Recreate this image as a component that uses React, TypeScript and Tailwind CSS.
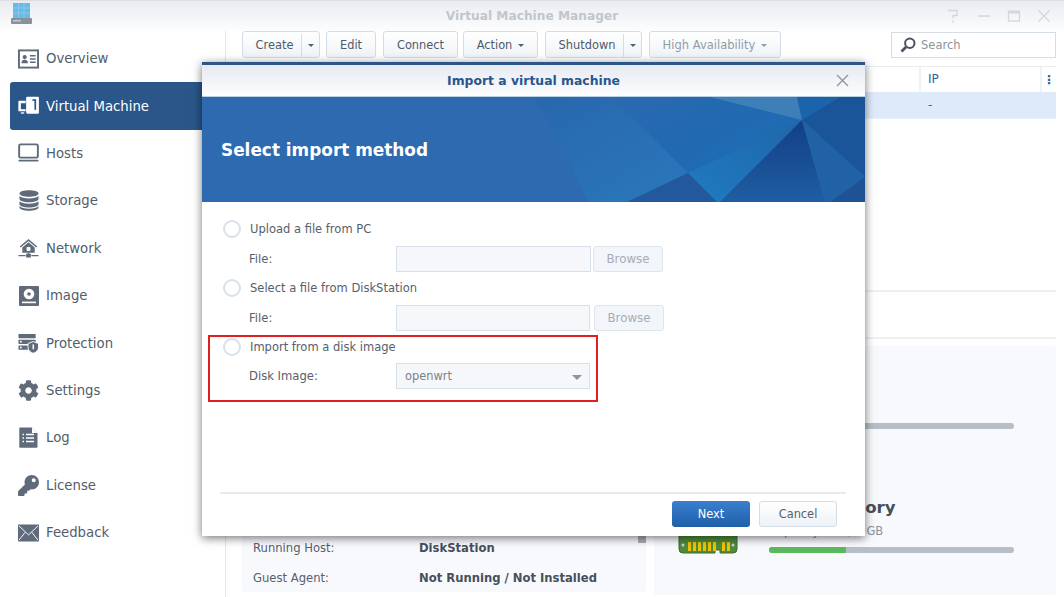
import React from "react";
import { FaCog, FaKey } from "react-icons/fa";

const I = "#5f6b7a";

const OverviewIcon = () => (
  <svg width="22" height="20" viewBox="0 0 22 20">
    <rect x="1" y="1" width="20" height="18" fill="none" stroke={I} strokeWidth="2" />
    <circle cx="7" cy="8" r="2.2" fill={I} />
    <path d="M3.6 14.5c0-2.6 1.4-3.6 3.4-3.6s3.4 1 3.4 3.6z" fill={I} />
    <path d="M12.5 6.5h6M12.5 10h6M12.5 13.5h6" stroke={I} strokeWidth="1.6" />
  </svg>
);
const VmIcon = () => (
  <svg width="22" height="20" viewBox="0 0 22 20">
    <path d="M8 4.5H1.2a.8.8 0 0 0-.8.8v10.2h7.6v-2.2H3V7h5z" fill="#fff" />
    <rect x="3" y="16.6" width="3.5" height="1.4" fill="#fff" />
    <path d="M10 .3h11a.9.9 0 0 1 .9.9v15.9a.9.9 0 0 1-.9.9H10a1.500 1.500 0 0 1-1.500-1.500V1.800A1.500 1.500 0 0 1 10 .3z" fill="#fff" />
    <rect x="17.200" y="3" width="1.800" height="11" fill="#2a5689" />
    <rect x="15" y="3" width="3.500" height="1.600" fill="#2a5689" />
  </svg>
);
const HostsIcon = () => (
  <svg width="22" height="20" viewBox="0 0 22 20">
    <rect x="1.200" y="1" width="19.600" height="13.800" rx="1.500" fill="none" stroke={I} strokeWidth="2" />
    <rect x="0.500" y="17" width="21" height="2" rx="0.500" fill={I} />
  </svg>
);
const StorageIcon = () => (
  <svg width="20" height="21" viewBox="0 0 20 21">
    <path d="M0.500 3.500C0.500 1.500 5 .3 10 .3s9.500 1.200 9.500 3.200S15 6.800 10 6.800.500 5.500.500 3.500z" fill={I} />
    <path d="M0.500 6v3c0 2 4.500 3.200 9.500 3.200s9.500-1.200 9.500-3.200V6c-1.500 1.700-5 2.400-9.500 2.400S2 7.700.500 6z" fill={I} />
    <path d="M0.500 11.300v3c0 2 4.500 3.200 9.500 3.200s9.500-1.200 9.500-3.200v-3c-1.500 1.700-5 2.400-9.500 2.400s-8-.7-9.500-2.400z" fill={I} />
    <path d="M0.500 16v1.500c0 2 4.500 3.200 9.500 3.200s9.500-1.200 9.500-3.200V16c-1.500 1.700-5 2.800-9.500 2.800S2 17.700.500 16z" fill={I} />
  </svg>
);
const NetworkIcon = () => (
  <svg width="22" height="21" viewBox="0 0 22 21">
    <path d="M11 .5 1.800 8.500l1 1L11 2.600l8.200 6.900 1-1z" fill={I} />
    <path d="M11 4 4.500 9.500V15h13V9.500z" fill={I} />
    <rect x="9" y="9" width="4" height="4" rx="0.800" fill="#fff" />
    <path d="M0.500 18h7.500M14 18h7.500" stroke={I} strokeWidth="1.500" />
    <rect x="8.500" y="16" width="5" height="4" fill={I} />
    <rect x="10.200" y="15" width="1.600" height="2" fill={I} />
  </svg>
);
const ImageIcon = () => (
  <svg width="20" height="20" viewBox="0 0 20 20">
    <rect x="0" y="0" width="20" height="20" rx="1" fill={I} />
    <circle cx="10" cy="8" r="5.300" fill="#fff" />
    <circle cx="10" cy="8" r="1.800" fill={I} />
    <rect x="3" y="15.600" width="14" height="1.600" fill="#fff" />
  </svg>
);
const ProtectionIcon = () => (
  <svg width="22" height="21" viewBox="0 0 22 21">
    <rect x="0.500" y="0.500" width="18" height="4.500" rx="0.500" fill={I} />
    <rect x="0.500" y="6.500" width="18" height="4.500" rx="0.500" fill={I} />
    <rect x="0.500" y="12.500" width="11" height="4.500" rx="0.500" fill={I} />
    <circle cx="3" cy="8.700" r="1" fill="#fff" />
    <circle cx="3" cy="14.700" r="1" fill="#fff" />
    <path d="M16 8.500l5.500 2v4.500c0 2.800-2.700 4.800-5.500 5.800-2.800-1-5.500-3-5.500-5.800v-4.500z" fill={I} stroke="#fff" strokeWidth="1" />
    <rect x="15.200" y="11.500" width="1.600" height="5" fill="#fff" />
  </svg>
);
const LogIcon = () => (
  <svg width="19" height="21" viewBox="0 0 19 21">
    <path d="M1 .5h12l5.500 5.500v14a.7.7 0 0 1-.7.7H1a.7.7 0 0 1-.7-.7V1.200A.7.7 0 0 1 1 .5z" fill={I} />
    <path d="M13 .5v5.500h5.500z" fill="#fff" />
    <path d="M3.500 7.500h1.500M3.500 11h1.500M3.500 14.500h1.500M7 7.500h8M7 11h8M7 14.500h8" stroke="#fff" strokeWidth="1.700" />
  </svg>
);
const FeedbackIcon = () => (
  <svg width="22" height="18" viewBox="0 0 22 18">
    <rect width="22" height="18" fill={I} rx="0.500" />
    <path d="M1 1.500 11 11 21 1.500M1 16.500l6.500-8.200M21 16.500l-6.500-8.200" fill="none" stroke="#fff" strokeWidth="1" />
  </svg>
);

const nav: [string, React.ReactNode][] = [
  ["Overview", <OverviewIcon />],
  ["Virtual Machine", <VmIcon />],
  ["Hosts", <HostsIcon />],
  ["Storage", <StorageIcon />],
  ["Network", <NetworkIcon />],
  ["Image", <ImageIcon />],
  ["Protection", <ProtectionIcon />],
  ["Settings", <FaCog size={21} color={I} />],
  ["Log", <LogIcon />],
  ["License", <FaKey size={21} color={I} />],
  ["Feedback", <FeedbackIcon />],
];

const Caret = ({ cls = "border-t-[#56606c]" }: { cls?: string }) => (
  <span className={`inline-block w-0 h-0 border-x-[3px] border-x-transparent border-t-[3px] ${cls}`} />
);

const btn =
  "h-[27px] flex items-center justify-center rounded-[3px] border border-[#d3dde8] bg-gradient-to-b from-[#ffffff] to-[#eff3f8] text-[11.400px] text-[#4f5a67] pt-[2px]";

const ToolButton = ({ w, children, caret }: { w: string; children: React.ReactNode; caret?: boolean }) => (
  <div className={`${btn} ${w} gap-[6px]`}>
    {children}
    {caret && <Caret />}
  </div>
);

const SplitButton = ({ w, label }: { w: string; label: string }) => (
  <div className={`${btn} ${w}`}>
    <span className="flex-1 text-center pl-[5px]">{label}</span>
    <span className="w-[18px] h-full border-l border-[#d3dde8] flex items-center justify-center">
      <Caret />
    </span>
  </div>
);

const Radio = () => (
  <span className="w-[18px] h-[18px] rounded-full border-2 border-[#d9e1e9] bg-white shrink-0" />
);

const Field = ({ label, children, mt }: { label: string; children: React.ReactNode; mt: string }) => (
  <div className={`flex items-center h-[26px] ${mt}`}>
    <span className="w-[174px] pl-[27px] pt-[2px] text-[11.600px] text-[#56606d]">{label}</span>
    {children}
  </div>
);

const Input = ({ w }: { w: string }) => (
  <div className={`${w} h-[26px] border border-[#d7e0e9] bg-[#f5f7fa]`} />
);

const Browse = ({ ml }: { ml: string }) => (
  <div className={`${ml} w-[70px] h-[26px] pt-[2px] rounded-[3px] border border-[#dde5ed] bg-[#f2f5f9] flex items-center justify-center text-[11.800px] text-[#a5adb6]`}>
    Browse
  </div>
);

const Choice = ({ label, mt }: { label: string; mt: string }) => (
  <div className={`flex items-center h-[26px] gap-[9px] ${mt}`}>
    <Radio />
    <span className="pt-[2px] text-[11.500px] text-[#56606d]">{label}</span>
  </div>
);

const Banner = () => (
  <svg className="absolute inset-0" width="663" height="105" viewBox="0 0 663 105">
    <defs>
      <linearGradient id="f1" x1="0" y1="0" x2="1" y2="0.700">
        <stop offset="0" stopColor="#2d6ab0" />
        <stop offset="0.500" stopColor="#2269b0" />
        <stop offset="1" stopColor="#1d6db5" />
      </linearGradient>
      <linearGradient id="f4" x1="0" y1="0" x2="0.800" y2="1">
        <stop offset="0" stopColor="#2867ad" />
        <stop offset="1" stopColor="#2a76ba" />
      </linearGradient>
      <linearGradient id="f2" x1="0" y1="1" x2="1" y2="0">
        <stop offset="0" stopColor="#1f7bc1" />
        <stop offset="1" stopColor="#1f66a9" />
      </linearGradient>
      <linearGradient id="f3" x1="0.500" y1="0" x2="0.500" y2="1">
        <stop offset="0" stopColor="#133f86" />
        <stop offset="1" stopColor="#1f5da2" />
      </linearGradient>
    </defs>
    <rect width="663" height="105" fill="#2d6ab0" />
    <polygon points="333,0 387,105 425,105 486,76 430,20 400,0" fill="url(#f4)" />
    <polygon points="400,0 430,20 486,76 600,23 596,0" fill="url(#f1)" />
    <polygon points="508,0 595,0 600,23" fill="#3f7fb8" />
    <polygon points="595,0 638,0 600,23" fill="#1a64ac" />
    <polygon points="638,0 663,0 663,80 600,23" fill="#1a5599" />
    <polygon points="486,76 600,23 518,105 515,105" fill="url(#f2)" />
    <polygon points="425,105 486,76 515,105" fill="#24589c" />
    <polygon points="600,23 518,105 623,105" fill="url(#f3)" />
    <polygon points="600,23 663,80 628,105 623,105" fill="#2161a6" />
    <polygon points="628,105 663,80 663,105" fill="#1e5294" />
  </svg>
);

const Resource = ({ title, sub, used, icon }: { title: string; sub: string; used: string; icon?: React.ReactNode }) => (
  <div className="h-[125px] flex items-end pb-[42px] pl-[24px] pr-[42px]">
    <div className="w-[60px] h-[60px] -mb-[2px] flex items-end shrink-0">{icon}</div>
    <div className="ml-[31px] flex-1">
      <div className="text-[16.600px] leading-[22px] font-bold text-[#46505c]">{title}</div>
      <div className="text-[11.500px] leading-[18px] mt-[3px] text-[#8a939d]">{sub}</div>
      <div className="h-[6px] rounded-full bg-[#b6bec7] mt-[7px] overflow-hidden">
        <div className={`h-full bg-[#5cb85c] ${used}`} />
      </div>
    </div>
  </div>
);

const Chip = () => (
  <svg width="60" height="60" viewBox="0 0 60 60">
    <path d="M1 0h58v54a4 4 0 0 1-4 4H42v-3h-5v3H5a4 4 0 0 1-4-4z" fill="#4e8b3a" stroke="#3c6a2e" />
    {[10, 15, 20, 25, 30, 35].map((x) => (
      <rect key={x} x={x} y="47" width="3" height="9" fill="#f3c100" />
    ))}
    {[44, 49].map((x) => (
      <rect key={x} x={x} y="47" width="3" height="9" fill="#f3c100" />
    ))}
    <circle cx="5" cy="50" r="1.500" fill="#ccd" />
    <circle cx="55" cy="50" r="1.500" fill="#ccd" />
  </svg>
);

export default function App() {
  return (
    <div className="relative w-[1064px] h-[597px] overflow-hidden bg-white flex flex-col [font-family:'DejaVu_Sans',sans-serif]">
      <div className="h-[31px] shrink-0 border-t border-[#dcdfe4] bg-gradient-to-b from-[#e9ecf0] to-[#fdfdfe] flex items-center relative">
        <div className="w-[30px] ml-[11px] mt-[-4px]">
          <svg width="22" height="22" viewBox="0 0 22 22">
            <rect x="2" y="0" width="17" height="15" fill="#6ab9e6" />
            <path d="M2 5h17M2 10h17M7.500 0v15M13 0v15" stroke="#8fcdf0" strokeWidth="0.800" />
            <rect x="0" y="15" width="21" height="6" rx="1" fill="#8a9299" />
            <rect x="2" y="17" width="8" height="1.500" fill="#c2c8cd" />
          </svg>
        </div>
        <div className="absolute inset-x-0 text-center text-[12.200px] font-bold text-[#c1c6cc] top-[6px]">Virtual Machine Manager</div>
        <div className="ml-auto mr-[12px] flex items-center gap-[14px] text-[#d3d6da]">
          <svg width="16" height="16" viewBox="0 0 16 16" fill="none" stroke="currentColor" strokeWidth="1.300">
            <path d="M2 2.500h9v5H7v3M7 12.500v2" />
          </svg>
          <svg width="16" height="16" viewBox="0 0 16 16" fill="none" stroke="currentColor" strokeWidth="1.500">
            <path d="M2 8h12" />
          </svg>
          <svg width="16" height="16" viewBox="0 0 16 16" fill="none" stroke="currentColor" strokeWidth="1.300">
            <rect x="2.500" y="3" width="11" height="10" />
            <path d="M2.500 4.500h11" strokeWidth="2" />
          </svg>
          <svg width="16" height="16" viewBox="0 0 16 16" fill="none" stroke="currentColor" strokeWidth="1.300">
            <path d="M2.500 2.500l11 11M13.500 2.500l-11 11" />
          </svg>
        </div>
      </div>

      <div className="flex-1 flex min-h-0">
        <aside className="w-[226px] shrink-0 border-r border-[#e3e6ea] pl-[10px] pr-[8px] pt-[4px] flex flex-col">
          {nav.map(([label, icon], i) => (
            <div
              key={label}
              className={`h-[47.400px] shrink-0 flex items-center pl-[8px] gap-[7px] text-[13.250px] rounded-[3px] ${
                i === 1 ? "bg-[#2a5689] text-white" : "text-[#525d6b]"
              }`}
            >
              <span className="w-[21px] flex items-center justify-center shrink-0">{icon}</span>
              <span className="pt-[1px]">{label}</span>
            </div>
          ))}
        </aside>

        <main className="flex-1 min-w-0 pl-[16px] pr-[8px] flex flex-col">
          <div className="flex items-center h-[27px] shrink-0">
            <SplitButton w="w-[78px]" label="Create" />
            <div className="ml-[6px]"><ToolButton w="w-[50px]">Edit</ToolButton></div>
            <div className="ml-[7px]"><ToolButton w="w-[75px]">Connect</ToolButton></div>
            <div className="ml-[5px]"><ToolButton w="w-[75px]" caret>Action</ToolButton></div>
            <div className="ml-[7px]"><SplitButton w="w-[97px]" label="Shutdown" /></div>
            <div className="ml-[7px]">
              <div className={`${btn} w-[132px] gap-[6px] !text-[#939ca6] !text-[11.500px]`}>High Availability <Caret cls="border-t-[#939ca6]" /></div>
            </div>
            <div className="ml-auto w-[165px] h-[26px] border border-[#d6dde5] bg-white flex items-center pl-[8px] gap-[5px] text-[11.500px] text-[#8b949e]">
              <svg width="16" height="16" viewBox="0 0 16 16" fill="none" stroke="#48525e">
                <circle cx="9.800" cy="6.200" r="4.700" strokeWidth="2" />
                <path d="M6 10 1.500 14.500" strokeWidth="2.600" />
              </svg>
              <span className="pt-[2px]">Search</span>
            </div>
          </div>

          <div className="mt-[8px] shrink-0 border-t border-[#e9edf2]">
            <div className="h-[25px] flex text-[12px] text-[#2f5f98]">
              <div className="flex-1" />
              <div className="w-[121px] border-l-2 border-[#f0f3f6] pl-[7px] pb-[2px] flex items-center">IP</div>
              <div className="w-[16px] border-l-2 border-[#f0f3f6] flex items-center justify-center font-bold">⋮</div>
            </div>
            <div className="h-[27px] bg-[#deeafa] flex items-center text-[12px] text-[#56606d] border-b border-[#e9f0f8]">
              <div className="flex-1" />
              <div className="w-[137px] pl-[9px]">-</div>
            </div>
          </div>

          <div className="mt-[171px] h-[49px] shrink-0 border-y-2 border-[#eeeff1]" />

          <div className="mt-[7px] flex-1 flex min-h-0 gap-[8px] pb-[2px]">
            <div className="relative w-[404px] shrink-0 mb-[3px] bg-[#f8f9fd] rounded-[3px] flex flex-col justify-end gap-[2px] pl-[11px] text-[11.600px]">
              <div className="absolute right-[0px] top-[190px] w-[8px] h-[7px] bg-[#a9afb6]" />
              <div className="flex h-[28px] items-center pt-[2px]">
                <span className="w-[166px] text-[#56606d]">Running Host:</span>
                <span className="font-bold text-[#46505c]">DiskStation</span>
              </div>
              <div className="flex h-[28px] items-center pt-[2px]">
                <span className="w-[166px] text-[#56606d]">Guest Agent:</span>
                <span className="font-bold text-[#46505c]">Not Running / Not Installed</span>
              </div>
            </div>
            <div className="flex-1 bg-[#f8f9fd] rounded-[3px] flex flex-col">
              <Resource title="Total CPU" sub="1 Core" used="w-0" />
              <Resource title="Total Memory" sub="Capacity: 1.0 / 4 GB" used="w-[31.400%]" icon={<Chip />} />
            </div>
          </div>
        </main>
      </div>

      {/* Modal dialog */}
      <div className="absolute left-[202px] top-[62px] w-[663px] h-[474px] bg-white border-t-[3px] border-[#2a5689] shadow-[0_2px_9px_rgba(0,0,0,0.55)] flex flex-col">
        <div className="h-[32px] pt-[2px] shrink-0 bg-gradient-to-b from-[#e6eaf1] to-[#fdfdfe] border-b border-[#bcd0e4] flex items-center justify-center relative">
          <span className="text-[12.400px] font-bold text-[#29568c]">Import a virtual machine</span>
          <svg className="absolute right-[16px] top-[9px]" width="13" height="13" viewBox="0 0 13 13" fill="none" stroke="#8d949c" strokeWidth="1.300">
            <path d="M1 1l11 11M12 1 1 12" />
          </svg>
        </div>
        <div className="relative h-[105px] pt-[3px] shrink-0 overflow-hidden flex items-center pl-[19px]">
          <Banner />
          <span className="relative text-[16.900px] font-bold text-white">Select import method</span>
        </div>
        <div className="flex-1 flex flex-col pl-[21px] pr-[19px] pt-[14px]">
          <Choice label="Upload a file from PC" mt="" />
          <Field label="File:" mt="mt-[4px] -ml-[1px]">
            <Input w="w-[195px]" />
            <Browse ml="ml-[2px]" />
          </Field>
          <Choice label="Select a file from DiskStation" mt="mt-[3px]" />
          <Field label="File:" mt="mt-[4px] -ml-[1px]">
            <Input w="w-[194px]" />
            <Browse ml="ml-[4px]" />
          </Field>
          <Choice label="Import from a disk image" mt="mt-[3px]" />
          <Field label="Disk Image:" mt="mt-[3px] -ml-[1px]">
            <div className="w-[194px] h-[26px] border border-[#d7e0e9] bg-[#f5f7fa] flex items-center justify-between pl-[8px] pr-[7px] pt-[2px] text-[11.400px] text-[#7a838d]">
              openwrt
              <span className="w-0 h-0 border-x-[5px] border-x-transparent border-t-[5px] border-t-[#8a929b]" />
            </div>
          </Field>
          <div className="mt-auto -ml-[3px] border-t-2 border-[#e8eaec] h-[44px] flex items-center justify-end gap-[9px] pr-[9px] pb-[3px] shrink-0">
            <div className="w-[78px] h-[26px] pt-[2px] rounded-[3px] bg-gradient-to-b from-[#3a7fd0] to-[#1f5fa8] flex items-center justify-center text-[11.400px] text-white">Next</div>
            <div className="w-[78px] h-[26px] pt-[2px] rounded-[3px] border border-[#d3dde8] bg-gradient-to-b from-white to-[#eef2f7] flex items-center justify-center text-[11.400px] text-[#56606d]">Cancel</div>
          </div>
        </div>
      </div>

      {/* Red annotation */}
      <div className="absolute left-[208px] top-[335px] w-[390px] h-[67px] border-2 border-[#e02020]" />
    </div>
  );
}
